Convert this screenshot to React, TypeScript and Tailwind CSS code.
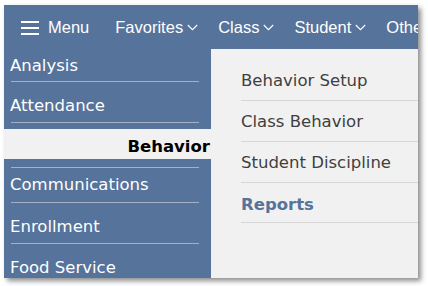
const navItems = ["Favorites", "Class", "Student", "Other"];

const leftTop = ["Analysis", "Attendance"];
const subItems = ["Behavior Setup", "Class Behavior", "Student Discipline"];

function Chevron() {
  return (
    <svg width="11" height="7" viewBox="0 0 11 7" className="ml-[4px] mt-[1px] shrink-0">
      <polyline points="0.8,1 5.5,5.7 10.2,1" fill="none" stroke="#ffffff" strokeWidth="1.1" />
    </svg>
  );
}

function Rule() {
  return <div className="h-px ml-[7px] w-[188px] bg-[#a3b2c6]" />;
}

export default function App() {
  return (
    <div className="w-[428px] h-[286px] bg-white overflow-hidden">
      <div className="ml-[4px] mt-[5px] w-[414px] h-[273px] overflow-hidden flex flex-col bg-[#56739b] shadow-[3px_3px_5px_rgba(0,0,0,0.45)]">
        {/* top bar */}
        <div
          className="h-[44px] shrink-0 flex items-center pl-[17px] text-white text-[16.5px] whitespace-nowrap"
          style={{ fontFamily: '"Liberation Sans", Arial, sans-serif' }}
        >
          <div className="flex flex-col gap-[4px] w-[18px] mt-[2px] shrink-0">
            <span className="h-[2px] bg-white" />
            <span className="h-[2px] bg-white" />
            <span className="h-[2px] bg-white" />
          </div>
          <span className="ml-[9px]">Menu</span>
          {navItems.map((n, i) => (
            <div key={n} className={`flex items-center shrink-0 ${i === 0 ? "ml-[26px]" : "ml-[20px]"}`}>
              <span>{n}</span>
              <Chevron />
            </div>
          ))}
        </div>

        <div
          className="flex flex-1 min-h-0 text-[16.5px] leading-[20px]"
          style={{ fontFamily: '"DejaVu Sans", Verdana, sans-serif' }}
        >
          {/* module list */}
          <div className="w-[207px] shrink-0 flex flex-col text-white">
            <div className="pl-[6px] pt-[7px] pb-[5px]">{leftTop[0]}</div>
            <Rule />
            <div className="pl-[6px] pt-[14px] pb-[6px]">{leftTop[1]}</div>
            <Rule />
            <div className="mt-[6px] h-[31px] bg-[#f1f1f1] text-black font-bold text-right pt-[8px] pr-[1px]">
              Behavior
            </div>
            <div className="h-[8px]" />
            <Rule />
            <div className="pl-[6px] pt-[7px] pb-[7px]">Communications</div>
            <Rule />
            <div className="pl-[6px] pt-[14px] pb-[6px]">Enrollment</div>
            <Rule />
            <div className="pl-[6px] pt-[14px]">Food Service</div>
          </div>

          {/* sub menu */}
          <div className="flex-1 bg-[#f1f1f1] pt-[11px] text-[#3f3f3f]">
            {subItems.map((s) => (
              <div key={s} className="ml-[30px] pt-[11px] pb-[9px] border-b border-[#d6d6d6]">
                {s}
              </div>
            ))}
            <div className="ml-[30px] pt-[12px] pb-[7px] border-b border-[#d6d6d6] font-bold text-[#56739b]">
              Reports
            </div>
          </div>
        </div>
      </div>
    </div>
  );
}
